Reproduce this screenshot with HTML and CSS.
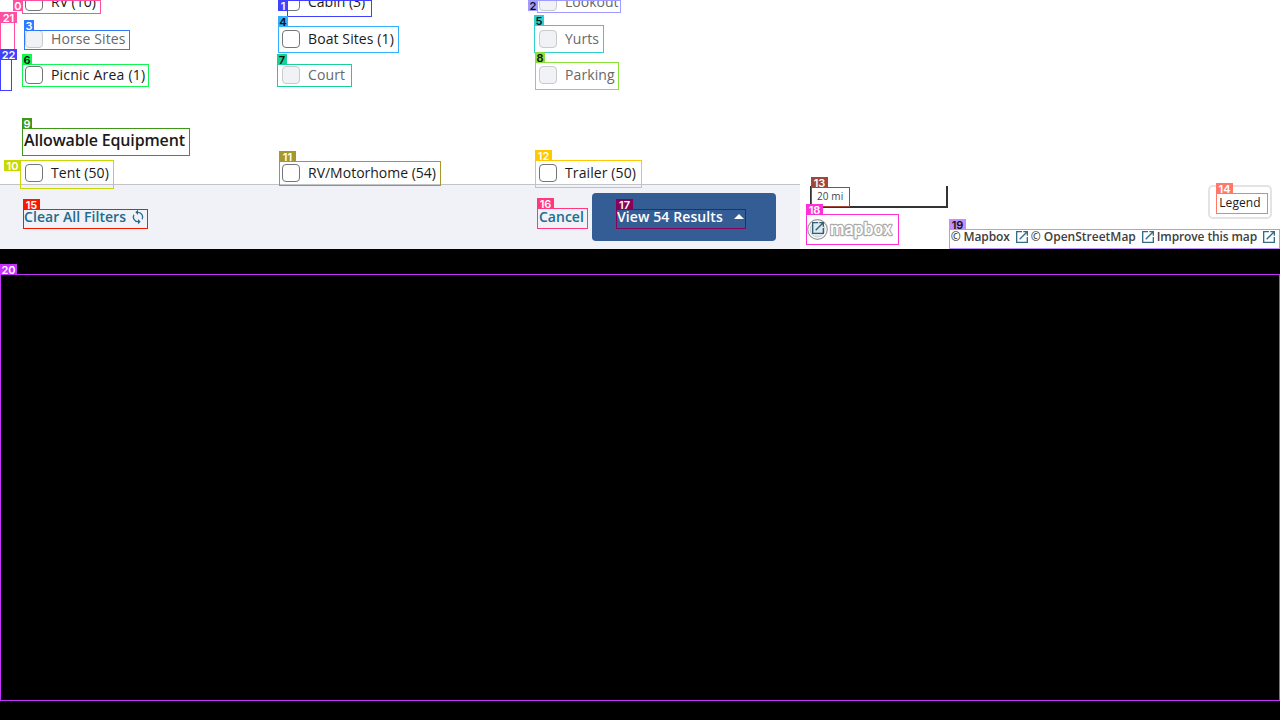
FILE: index.html
```html
<!DOCTYPE html>
<html lang="en">
<head>
<meta charset="utf-8">
<title>Search Filters</title>
<link rel="stylesheet" href="styles.css">
</head>
<body>
<svg class="defs" width="0" height="0">
  <symbol id="ext" viewBox="0 0 24 24"><path d="M19 19H5V5h7V3H3v18h18v-9h-2v7zM14 3v2h3.600l-9.800 9.800 1.400 1.400L19 6.400V10h2V3h-7z"/></symbol>
</svg>
<main class="screen">
  <section class="panel">
    <div class="filters">
      <div class="options sites">
        <label class="option"><span class="check"></span>RV (10)</label>
        <label class="option"><span class="check"></span>Cabin (3)</label>
        <label class="option off"><span class="check"></span>Lookout</label>
        <label class="option off loose"><span class="check"></span>Horse Sites</label>
        <label class="option loose"><span class="check"></span>Boat Sites (1)</label>
        <label class="option off"><span class="check"></span>Yurts</label>
        <label class="option looser"><span class="check"></span>Picnic Area (1)</label>
        <label class="option off loose"><span class="check"></span>Court</label>
        <label class="option off loose"><span class="check"></span>Parking</label>
      </div>
      <h2 class="heading">Allowable Equipment</h2>
      <div class="options">
        <label class="option loose"><span class="check"></span>Tent (50)</label>
        <label class="option"><span class="check"></span>RV/Motorhome (54)</label>
        <label class="option loose"><span class="check"></span>Trailer (50)</label>
      </div>
    </div>
    <footer class="actions">
      <a class="link clear">Clear All Filters
        <svg class="sync" viewBox="0 0 24 24"><path d="M12 4V1L8 5l4 4V6c3.300 0 6 2.700 6 6 0 1-.25 2-.7 2.800l1.460 1.460A8 8 0 0 0 12 4zm0 14c-3.300 0-6-2.700-6-6 0-1 .25-2 .7-2.800L5.240 7.740A8 8 0 0 0 12 20v3l4-4-4-4v3z"/></svg>
      </a>
      <a class="link">Cancel</a>
      <button class="results"><span class="loose">View 54 Results</span><i class="caret"></i></button>
    </footer>
  </section>
  <section class="map">
    <div class="controls">
      <div class="scale">20 mi</div>
      <div class="legend">Legend</div>
    </div>
    <div class="credits">
      <svg class="logo" viewBox="0 0 90 24">
        <circle cx="11.500" cy="12.500" r="9.800" fill="#fff" stroke="#999" stroke-width="1.200"/>
        <circle cx="11.500" cy="12.500" r="7.500" fill="#dceaf1" stroke="#bbb" stroke-width=".7"/>
        <svg x="4" y="3" width="16" height="16" fill="#345e73"><use href="#ext"/></svg>
        <text class="wordmark" x="24" y="17.500" textLength="62" lengthAdjust="spacingAndGlyphs">mapbox</text>
      </svg>
      <div class="attribution">
        <a class="tight">© Mapbox</a><svg class="ext"><use href="#ext"/></svg>
        <a>© OpenStreetMap</a><svg class="ext"><use href="#ext"/></svg>
        <a class="tight">Improve this map</a><svg class="ext"><use href="#ext"/></svg>
      </div>
    </div>
  </section>
</main>
<div id="marks"></div>
<script src="marks.js"></script>
</body>
</html>
```
FILE: styles.css
```css
* { box-sizing: border-box; }
body { margin: 0; width: 1280px; height: 720px; overflow: hidden; background: #000; font-family: "Open Sans", "Noto Sans", sans-serif; font-size: 14px; color: #1b1b1b; }
.defs { display: block; }
.screen { display: flex; height: 249px; background: #fff; }
.panel { width: 800px; display: flex; flex-direction: column; }
.filters { height: 184px; overflow: hidden; padding-left: 25px; display: flex; flex-direction: column; justify-content: flex-end; }
.options { display: grid; grid-template-columns: repeat(3, 257px); grid-auto-rows: 36px; flex: none; }
.sites { grid-template-rows: 37px 36px 36px; }
.sites .option:nth-child(-n+3) { height: 36px; }
.option { display: flex; align-items: center; gap: 8px; white-space: nowrap; line-height: 20px; }
.loose { letter-spacing: .1px; }
.looser { letter-spacing: .2px; }
.check { width: 18px; height: 18px; border: 1px solid #71767a; border-radius: 4px; background: #fff; }
.off { color: #68686a; }
.off .check { border-color: #c9cacc; background: #f1f2f5; }
.heading { flex: none; margin: 33px 0 1px -1px; font-size: 16px; line-height: 28px; font-weight: 600; letter-spacing: -.16px; }
.filters .options:last-child { margin-bottom: -7px; }
.actions { height: 65px; border-top: 1px solid #c3c4c7; background: #f0f2f7; display: flex; align-items: center; padding: 0 24px; font-weight: 600; }
.link { color: #226b8e; line-height: 20px; }
.clear { width: 515px; display: flex; align-items: center; gap: 4px; letter-spacing: .06px; }
.sync { width: 16px; height: 16px; fill: currentColor; }
.results { margin-left: auto; width: 184px; height: 48px; padding: 0 32px 1px 25px; border: 0; border-radius: 4px; background: #345d96; color: #fff; font: inherit; line-height: 20px; display: flex; align-items: center; justify-content: space-between; white-space: nowrap; }
.caret { border: 5px solid transparent; border-top: 0; border-bottom-color: #fff; }
.map { flex: 1; display: flex; flex-direction: column; justify-content: flex-end; }
.controls { display: flex; justify-content: space-between; align-items: flex-start; padding: 0 8px 0 10px; height: 29px; }
.scale { width: 138px; height: 22px; border: 2px solid #333; border-top: 0; padding: 0 5px; margin-top: 1px; font-size: 10px; line-height: 21px; color: #444; letter-spacing: .1px; }
.legend { width: 64px; height: 34px; border: 2px solid #e3e3e3; border-radius: 5px; font-size: 12px; line-height: 31px; text-align: center; letter-spacing: .1px; }
.credits { display: flex; justify-content: space-between; align-items: flex-end; height: 35px; padding-left: 6px; }
.logo { width: 90px; height: 24px; margin-bottom: 8px; }
.wordmark { font: 600 17px Inter, sans-serif; fill: #fff; stroke: #aaa; stroke-width: 2.4px; stroke-linejoin: round; paint-order: stroke; }
.attribution { display: flex; align-items: center; height: 24px; padding: 0 2px 1px 0; font-size: 12px; font-weight: 600; color: #404040; white-space: nowrap; }
.tight { letter-spacing: -.12px; }
.ext { width: 16px; height: 16px; fill: #346d8a; margin: 0 1px 0 4px; }
.mark { position: absolute; border: 1px solid; }
.tag { position: absolute; width: 10px; height: 11px; font: 600 11px/12px Inter, sans-serif; text-align: center; }
.tag.wide { width: 17px; }
```
FILE: marks.js
```js
// number, left, top, right, bottom, colour, text colour, tag left, tag top
const marks = [
  [0,22,0,101,14,'#ff4fa3','#fff',13,0],
  [1,287,0,372,17,'#4040ff','#fff',278,0],
  [2,537,0,621,13,'#a09cff','#111',528,0],
  [3,24,30,130,50,'#3078ff','#fff'],
  [4,278,26,399,53,'#30b0ff','#111'],
  [5,534,25,604,53,'#30d0d0','#111'],
  [6,22,64,149,87,'#10f850','#111'],
  [7,277,64,352,87,'#18d098','#111'],
  [8,535,62,619,90,'#88e038','#111'],
  [9,22,128,190,156,'#409818','#fff'],
  [10,20,160,114,189,'#c8d800','#fff',4,160],
  [11,279,161,441,186,'#a89828','#fff'],
  [12,535,160,642,188,'#ffc800','#fff'],
  [13,811,187,850,207,'#a04838','#fff'],
  [14,1216,193,1268,214,'#ff7868','#fff'],
  [15,23,209,148,229,'#f81800','#fff'],
  [16,537,208,588,229,'#ff3880','#fff'],
  [17,616,209,746,229,'#880058','#fff'],
  [18,806,214,899,245,'#ff30d8','#fff'],
  [19,949,229,1280,249,'#c090ff','#111'],
  [20,0,274,1280,701,'#c830ff','#fff'],
  [21,0,22,15,50,'#ff4fa3','#fff'],
  [22,0,59,12,91,'#4040ff','#fff']
];
const host = document.getElementById('marks');
for (const [n, l, t, r, b, color, ink, tl = l, tt = t - 10] of marks) {
  const box = document.createElement('div');
  box.className = 'mark';
  box.style.cssText = `left:${l}px;top:${t}px;width:${r - l}px;height:${b - t}px;border-color:${color}`;
  const tag = document.createElement('div');
  tag.className = n > 9 ? 'tag wide' : 'tag';
  tag.textContent = n;
  tag.style.cssText = `left:${tl}px;top:${tt}px;background:${color};color:${ink}`;
  host.append(box, tag);
}
```
